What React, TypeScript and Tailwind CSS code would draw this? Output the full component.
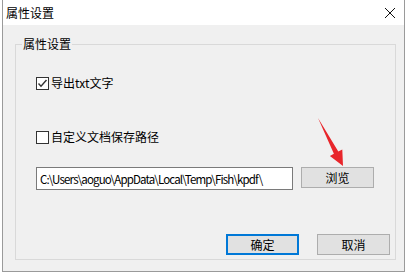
import React from "react";

const font = { fontFamily: '"Noto Sans CJK SC", "Noto Sans", sans-serif' };

function CheckBox({ checked }: { checked: boolean }) {
  return (
    <svg width="13" height="13" viewBox="0 0 13 13" className="shrink-0">
      <rect x="0.5" y="0.5" width="12" height="12" fill="#fff" stroke="#333" />
      {checked && (
        <polyline points="2.5,6.5 5,9.2 10.5,3" fill="none" stroke="#333" strokeWidth="1.4" />
      )}
    </svg>
  );
}

export default function App() {
  return (
    <div
      className="relative w-[408px] h-[274px] bg-white pl-[2px] pr-[3px] pb-[2px] text-black text-[12px] leading-[16px]"
      style={font}
    >
      <div className="flex flex-col h-full border-l border-r border-b border-[#9a9a9a] bg-[#f0f0f0]">
        <div className="h-[25px] bg-white flex items-center justify-between pl-[3px] pr-[8px]">
          <span>属性设置</span>
          <svg width="12" height="12" viewBox="0 0 12 12">
            <path d="M1 1 L11 11 M11 1 L1 11" stroke="#111" strokeWidth="1" />
          </svg>
        </div>
        <div className="flex-1 pl-[12px] pr-[8px] pt-[11px]">
          <fieldset className="border border-[#d9d9d9] pl-[20px] pr-[5px] pb-[4px] flex flex-col">
            <legend className="ml-[-14px] px-[1px] leading-[16px]">属性设置</legend>
            <div className="mt-[23px] h-[16px] flex items-center gap-[2px]">
              <CheckBox checked />
              <span>导出txt文字</span>
            </div>
            <div className="mt-[38px] h-[16px] flex items-center gap-[2px]">
              <CheckBox checked={false} />
              <span>自定义文档保存路径</span>
            </div>
            <div className="mt-[22px] flex items-start">
              <div className="w-[257px] h-[23px] bg-white border border-[#7a7a7a] flex items-center pl-[3px] text-[11.5px] tracking-[-0.85px] whitespace-nowrap overflow-hidden">
                C:\Users\aoguo\AppData\Local\Temp\Fish\kpdf\
              </div>
              <div className="ml-[8px] w-[73px] h-[21px] bg-[#e1e1e1] border border-[#adadad] flex items-center justify-center">
                浏览
              </div>
            </div>
            <div className="mt-[44px] flex justify-end gap-[18px]">
              <div className="w-[73px] h-[21px] bg-[#e1e1e1] border-2 border-[#0078d7] flex items-center justify-center">
                确定
              </div>
              <div className="w-[73px] h-[21px] bg-[#e1e1e1] border border-[#adadad] flex items-center justify-center">
                取消
              </div>
            </div>
          </fieldset>
        </div>
      </div>
      <svg className="absolute left-0 top-0 pointer-events-none" width="408" height="274">
        <polygon
          points="318,118 338.3,151.5 342.3,149.5 343,166 329.9,155.9 333.9,153.8"
          fill="#e8262b"
        />
      </svg>
    </div>
  );
}
